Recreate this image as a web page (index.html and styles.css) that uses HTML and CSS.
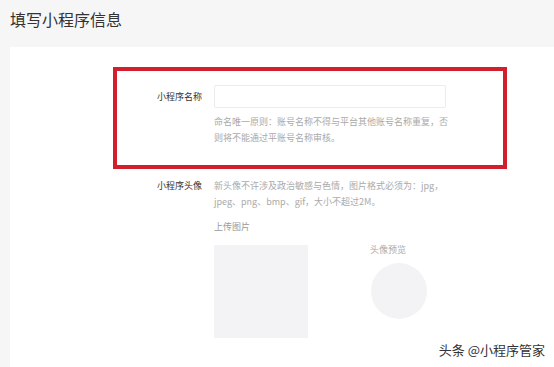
FILE: index.html
```html
<!DOCTYPE HTML>
<html>
<head>
  <meta charset="utf-8">
  <title>填写小程序信息</title>
  <link rel="stylesheet" href="styles.css">
</head>
<body>
<h1 class="page-title">填写小程序信息</h1>

<div class="panel">
  <div class="name-box">
    <div class="form-row">
      <label class="form-label">小程序名称</label>
      <div class="form-field">
        <input class="text-input" type="text">
        <p class="hint">命名唯一原则：账号名称不得与平台其他账号名称重复，否则将不能通过平账号名称审核。</p>
      </div>
    </div>
  </div>

  <div class="form-row avatar-row">
    <label class="form-label">小程序头像</label>
    <div class="form-field">
      <p class="hint">新头像不许涉及政治敏感与色情，图片格式必须为：jpg，jpeg、png、bmp、gif，大小不超过2M。</p>
      <p class="sub-title">上传图片</p>
      <div class="upload-area">
        <div class="upload-box"></div>
        <div class="preview">
          <p class="sub-title">头像预览</p>
          <div class="preview-circle"></div>
        </div>
      </div>
    </div>
  </div>
</div>

<div class="watermark">头条 @小程序管家</div>
</body>
</html>
```

FILE: styles.css
```css
body {
  margin: 0;
  padding: 0;
  background-color: #f6f6f6;
  font-family: "Noto Sans CJK SC", "Noto Sans", sans-serif;
  color: #333;
  height: 367px;
  overflow: hidden;
  position: relative;
}
.page-title {
  margin: 0;
  padding: 8px 0 0 10px;
  height: 47px;
  box-sizing: border-box;
  font-size: 16px;
  line-height: 22px;
  font-weight: normal;
  color: #333;
}
.panel {
  margin-left: 10px;
  background-color: #fff;
  padding: 20px 0 0 103px;
  height: 320px;
  box-sizing: border-box;
}
.name-box {
  width: 394px;
  height: 102px;
  box-sizing: border-box;
  border: 4px solid #d11f2e;
  padding: 14px 0 0 40px;
}
.form-row {
  display: flex;
  gap: 12px;
}
.form-label {
  width: 45px;
  font-size: 9px;
  line-height: 23px;
  white-space: nowrap;
  color: #333;
}
.form-field {
  width: 232px;
}
.text-input {
  display: block;
  width: 232px;
  height: 23px;
  box-sizing: border-box;
  margin: 0;
  border: 1px solid #ececec;
  border-radius: 2px;
  background: #fff;
}
.hint {
  width: 240px;
  margin: 6px 0 0;
  font-size: 9px;
  line-height: 16px;
  color: #aaa;
}
.avatar-row {
  padding: 9px 0 0 44px;
}
.avatar-row .form-label {
  line-height: 16px;
}
.avatar-row .hint {
  margin-top: 0;
}
.sub-title {
  margin: 9px 0 0;
  font-size: 9px;
  line-height: 16px;
  color: #999;
}
.upload-area {
  display: flex;
  gap: 62px;
  margin-top: 10px;
}
.upload-box {
  width: 94px;
  height: 93px;
  background-color: #f3f3f5;
  flex-shrink: 0;
}
.preview .sub-title {
  margin-top: -3px;
  color: #aaa;
}
.preview-circle {
  width: 56px;
  height: 56px;
  margin: 5px 0 0 1px;
  border-radius: 50%;
  background-color: #f3f3f5;
}
.watermark {
  position: absolute;
  right: 9px;
  bottom: 9px;
  font-size: 13px;
  line-height: 16px;
  color: #333;
}
```
